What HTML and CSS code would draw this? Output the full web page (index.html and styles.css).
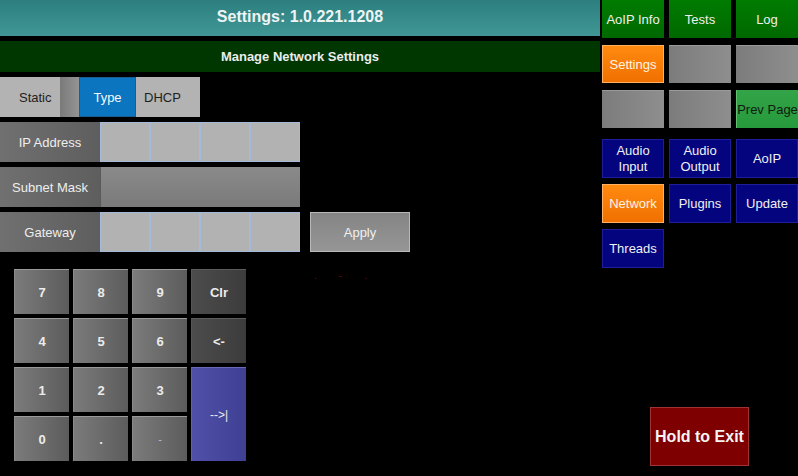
FILE: index.html
```html
<!DOCTYPE html>
<html>
<head>
<meta charset="utf-8">
<link rel="stylesheet" href="styles.css">
</head>
<body>
<div class="app">
  <div class="main">
    <div class="title">Settings: 1.0.221.1208</div>
    <div class="subtitle">Manage Network Settings</div>
    <div class="seg">
      <div class="seg-opt seg-left">Static</div>
      <div class="seg-track"></div>
      <div class="seg-sel">Type</div>
      <div class="seg-opt seg-right">DHCP</div>
    </div>
    <div class="field-row">
      <div class="label">IP Address</div>
      <div class="octets"><div class="oct"></div><div class="oct"></div><div class="oct"></div><div class="oct"></div></div>
    </div>
    <div class="field-row">
      <div class="label">Subnet Mask</div>
      <div class="wide"></div>
    </div>
    <div class="field-row">
      <div class="label">Gateway</div>
      <div class="octets"><div class="oct"></div><div class="oct"></div><div class="oct"></div><div class="oct"></div></div>
      <div class="apply">Apply</div>
    </div>
    <div class="lower">
      <div class="keypad">
        <div class="key">7</div><div class="key">8</div><div class="key">9</div><div class="key dark">Clr</div>
        <div class="key">4</div><div class="key">5</div><div class="key">6</div><div class="key dark">&lt;-</div>
        <div class="key">1</div><div class="key">2</div><div class="key">3</div><div class="key enter">--&gt;|</div>
        <div class="key">0</div><div class="key">.</div><div class="key small">-</div>
      </div>
      <div class="status"><span>.</span><span>-</span><span>.</span></div>
    </div>
  </div>
  <div class="side">
    <div class="grid">
      <div class="btn green">AoIP Info</div>
      <div class="btn green">Tests</div>
      <div class="btn green">Log</div>
      <div class="btn orange">Settings</div>
      <div class="btn grey"></div>
      <div class="btn grey"></div>
      <div class="btn grey"></div>
      <div class="btn grey"></div>
      <div class="btn lgreen">Prev Page</div>
    </div>
    <div class="grid grid2">
      <div class="btn blue">Audio<br>Input</div>
      <div class="btn blue">Audio<br>Output</div>
      <div class="btn blue">AoIP</div>
      <div class="btn orange">Network</div>
      <div class="btn blue">Plugins</div>
      <div class="btn blue">Update</div>
      <div class="btn blue">Threads</div>
    </div>
    <div class="exit">Hold to Exit</div>
  </div>
</div>
</body>
</html>
```
FILE: styles.css
```css
html, body {
  margin: 0;
  padding: 0;
  background: #000;
}
body {
  width: 798px;
  height: 476px;
  overflow: hidden;
  font-family: "Liberation Sans", Arial, sans-serif;
  color: #f2f2f2;
}
.app {
  display: flex;
  height: 476px;
}
.main {
  width: 600px;
  display: flex;
  flex-direction: column;
}
.title {
  height: 36px;
  background: linear-gradient(#2d7f7f, #409696);
  display: flex;
  align-items: center;
  justify-content: center;
  font-weight: bold;
  font-size: 16px;
  color: #eef4f4;
  padding-bottom: 2px;
  box-sizing: border-box;
}
.subtitle {
  margin-top: 5px;
  height: 31px;
  background: #003600;
  display: flex;
  align-items: center;
  justify-content: center;
  font-weight: bold;
  font-size: 13px;
  color: #ececec;
}
.seg {
  margin-top: 5px;
  height: 40px;
  width: 200px;
  display: flex;
  background: #b3b3b3;
  font-size: 13px;
}
.seg-opt {
  width: 60px;
  display: flex;
  align-items: center;
  justify-content: center;
  color: #1e1e1e;
}
.seg-left {
  justify-content: flex-start;
  padding-left: 19px;
  box-sizing: border-box;
}
.seg-right {
  width: 64px;
  justify-content: flex-start;
  padding-left: 8px;
  box-sizing: border-box;
}
.seg-track {
  width: 19px;
  background: linear-gradient(90deg, #7a7a7a, #949494);
}
.seg-sel {
  width: 57px;
  box-sizing: border-box;
  border: 1px solid #1a5e94;
  background: #0b76bf;
  color: #f4f8fc;
  display: flex;
  align-items: center;
  justify-content: center;
}
.field-row {
  margin-top: 5px;
  height: 40px;
  display: flex;
  font-size: 13px;
}
.label {
  width: 100px;
  background: linear-gradient(90deg, #707070, #5e5e5e);
  display: flex;
  align-items: center;
  justify-content: center;
  color: #eeeeee;
}
.octets {
  width: 200px;
  display: flex;
}
.oct {
  width: 50px;
  box-sizing: border-box;
  background: #b2b2b2;
  border: 1px solid #a4bad8;
}
.wide {
  width: 200px;
  background: linear-gradient(#8a8a8a, #7a7a7a);
  border-left: 1px solid #5a5a5a;
  box-sizing: border-box;
}
.apply {
  margin-left: 10px;
  width: 100px;
  box-sizing: border-box;
  border: 1px solid #b8b8b8;
  background: linear-gradient(#848484, #969696);
  display: flex;
  align-items: center;
  justify-content: center;
  color: #f0f0f0;
}
.lower {
  margin-top: 17px;
  display: flex;
  align-items: flex-start;
}
.status {
  margin-left: 68px;
  margin-top: 1px;
  display: flex;
  gap: 22px;
  font-size: 10px;
  line-height: 12px;
  color: #7a0000;
}
.keypad {
  margin-left: 14px;
  display: grid;
  grid-template-columns: repeat(4, 55px);
  grid-template-rows: repeat(4, 45px);
  gap: 4px;
}
.key {
  background: linear-gradient(90deg, #7b7b7b, #5c5c5c);
  border-top: 1px solid #9a9a9a;
  border-left: 1px solid #8a8a8a;
  box-sizing: border-box;
  display: flex;
  align-items: center;
  justify-content: center;
  font-weight: bold;
  font-size: 13px;
  color: #ececec;
}
.key.small {
  font-weight: normal;
  font-size: 11px;
  color: #bdbdbd;
}
.key.dark {
  background: linear-gradient(90deg, #4c4c4c, #3c3c3c);
  border-top: 1px solid #5c5c5c;
  border-left: 1px solid #555;
}
.key.enter {
  grid-row: span 2;
  background: linear-gradient(90deg, #5050a8, #3f3f94);
  border-top: 1px solid #6a6ab8;
  border-left: 1px solid #6262b0;
  font-weight: normal;
  font-size: 12px;
}
.side {
  margin-left: 2px;
  width: 196px;
  display: flex;
  flex-direction: column;
}
.grid {
  display: grid;
  grid-template-columns: repeat(3, 62px);
  grid-auto-rows: 38px;
  column-gap: 5px;
  row-gap: 7px;
}
.grid2 {
  margin-top: 11px;
  grid-auto-rows: 39px;
  row-gap: 6px;
}
.btn {
  box-sizing: border-box;
  display: flex;
  align-items: center;
  justify-content: center;
  text-align: center;
  font-size: 13px;
  line-height: 16px;
  color: #f0f0f0;
  padding-top: 1px;
}
.green {
  background: linear-gradient(#007c00, #006800);
}
.orange {
  background: linear-gradient(#ff8a10, #f07000);
  border: 1px solid #ffb060;
  color: #fff4e6;
}
.grey {
  background: linear-gradient(90deg, #7c7c7c, #8e8e8e);
  border-top: 1px solid #9a9a9a;
}
.lgreen {
  background: linear-gradient(#33a448, #269a3c);
  border-left: 1px solid #60c070;
  color: #101a10;
}
.blue {
  background: #04047e;
  border: 1px solid #1e1e9a;
}
.exit {
  margin-top: 139px;
  margin-left: 48px;
  width: 99px;
  height: 59px;
  box-sizing: border-box;
  background: #7e0000;
  border: 1px solid #a03434;
  display: flex;
  align-items: center;
  justify-content: center;
  font-weight: bold;
  font-size: 16px;
  color: #f4f4f4;
}
```
